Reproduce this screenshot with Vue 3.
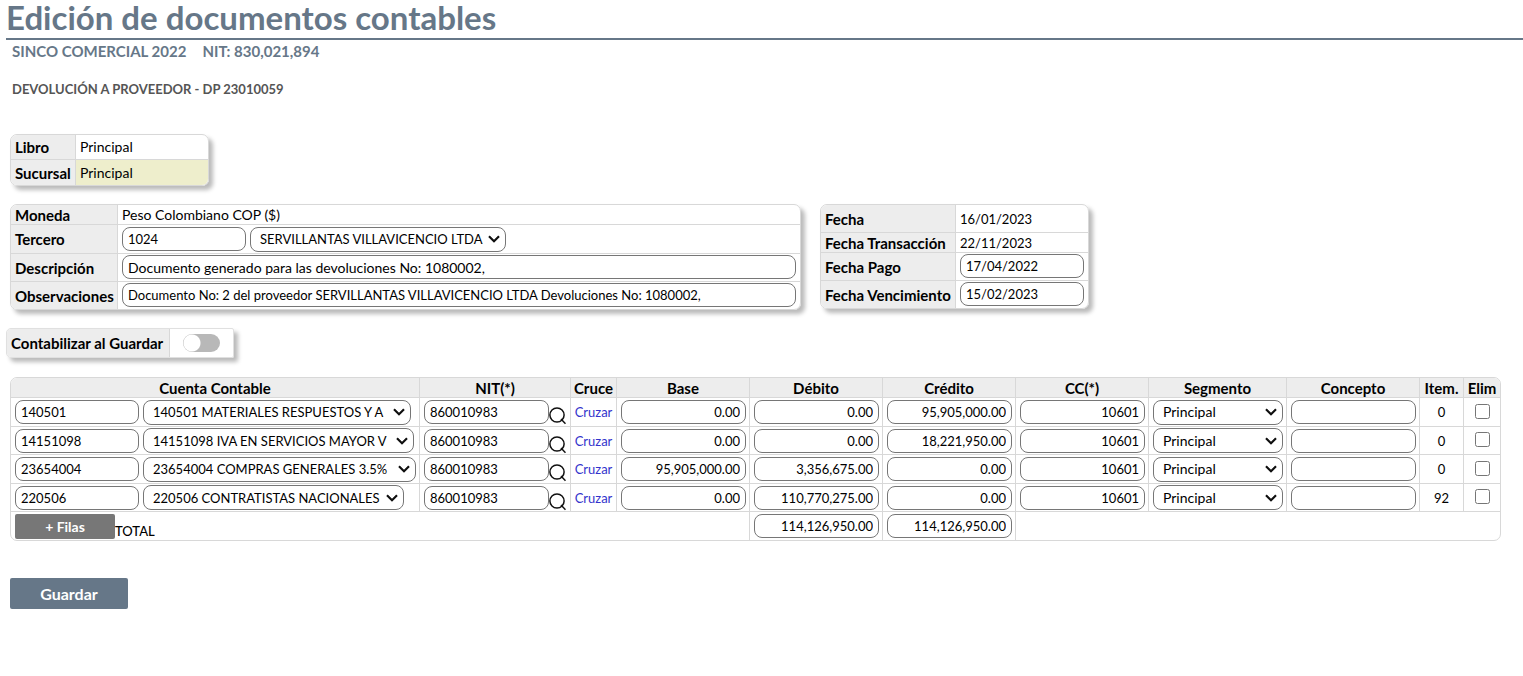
<script setup>
import { ref } from 'vue'

const moneda = 'Peso Colombiano COP ($)'
const tercero = ref('1024')
const descripcion = ref('Documento generado para las devoluciones No: 1080002,')
const observaciones = ref('Documento No: 2 del proveedor SERVILLANTAS VILLAVICENCIO LTDA Devoluciones No: 1080002,')
const fechaPago = ref('17/04/2022')
const fechaVencimiento = ref('15/02/2023')
const contabilizar = ref(false)

const filas = ref([
  { cuenta: '140501', nombre: '140501 MATERIALES RESPUESTOS Y A', ancho: 268, nit: '860010983', base: '0.00', debito: '0.00', credito: '95,905,000.00', cc: '10601', item: 0 },
  { cuenta: '14151098', nombre: '14151098 IVA EN SERVICIOS MAYOR V', ancho: 271, nit: '860010983', base: '0.00', debito: '0.00', credito: '18,221,950.00', cc: '10601', item: 0 },
  { cuenta: '23654004', nombre: '23654004 COMPRAS GENERALES 3.5%', ancho: 273, nit: '860010983', base: '95,905,000.00', debito: '3,356,675.00', credito: '0.00', cc: '10601', item: 0 },
  { cuenta: '220506', nombre: '220506 CONTRATISTAS NACIONALES', ancho: 261, nit: '860010983', base: '0.00', debito: '110,770,275.00', credito: '0.00', cc: '10601', item: 92 },
])
</script>

<template>
  <main class="page">
    <header>
      <h1>Edición de documentos contables</h1>
      <div class="company"><span>SINCO COMERCIAL 2022</span><span>NIT: 830,021,894</span></div>
      <h2>DEVOLUCIÓN A PROVEEDOR - DP 23010059</h2>
    </header>

    <table class="box book">
      <tbody>
        <tr><th scope="row">Libro</th><td>Principal</td></tr>
        <tr><th scope="row">Sucursal</th><td class="marked">Principal</td></tr>
      </tbody>
    </table>

    <div class="panels">
      <table class="box general">
        <tbody>
          <tr class="short"><th scope="row">Moneda</th><td class="roomy">{{ moneda }}</td></tr>
          <tr class="tall">
            <th scope="row"><label for="tercero">Tercero</label></th>
            <td>
              <div class="pair">
                <input id="tercero" v-model="tercero" class="code" type="text">
                <select class="provider" aria-label="Nombre del tercero"><option>SERVILLANTAS VILLAVICENCIO LTDA</option></select>
              </div>
            </td>
          </tr>
          <tr><th scope="row"><label for="descripcion">Descripción</label></th><td class="field"><input id="descripcion" v-model="descripcion" class="roomy" type="text"></td></tr>
          <tr><th scope="row"><label for="observaciones">Observaciones</label></th><td class="field"><input id="observaciones" v-model="observaciones" type="text"></td></tr>
        </tbody>
      </table>

      <table class="box dates">
        <tbody>
          <tr><th scope="row">Fecha</th><td>16/01/2023</td></tr>
          <tr class="short"><th scope="row">Fecha Transacción</th><td>22/11/2023</td></tr>
          <tr><th scope="row"><label for="pago">Fecha Pago</label></th><td class="field"><input id="pago" v-model="fechaPago" type="text"></td></tr>
          <tr><th scope="row"><label for="vencimiento">Fecha Vencimiento</label></th><td class="field"><input id="vencimiento" v-model="fechaVencimiento" type="text"></td></tr>
        </tbody>
      </table>
    </div>

    <div class="posting">
      <label for="contabilizar">Contabilizar al Guardar</label>
      <div class="switch-cell"><input id="contabilizar" v-model="contabilizar" class="switch" type="checkbox"></div>
    </div>

    <table class="entries">
      <colgroup>
        <col class="c-account"><col class="c-nit"><col class="c-cross"><col class="c-amount"><col class="c-amount"><col class="c-amount"><col class="c-amount"><col class="c-segment"><col class="c-amount"><col class="c-item"><col class="c-del">
      </colgroup>
      <thead>
        <tr>
          <th scope="col">Cuenta Contable</th>
          <th scope="col">NIT(*)</th>
          <th scope="col">Cruce</th>
          <th scope="col">Base</th>
          <th scope="col">Débito</th>
          <th scope="col">Crédito</th>
          <th scope="col">CC(*)</th>
          <th scope="col">Segmento</th>
          <th scope="col">Concepto</th>
          <th scope="col">Item.</th>
          <th scope="col">Elim</th>
        </tr>
      </thead>
      <tbody>
        <tr v-for="fila in filas" :key="fila.nombre">
          <td>
            <div class="pair">
              <input v-model="fila.cuenta" class="code" type="text" aria-label="Cuenta">
              <select :style="{ width: fila.ancho + 'px' }" aria-label="Nombre de la cuenta"><option>{{ fila.nombre }}</option></select>
            </div>
          </td>
          <td>
            <div class="lookup">
              <input v-model="fila.nit" type="text" aria-label="NIT">
              <button type="button" class="search" aria-label="Buscar NIT">
                <svg viewBox="0 0 17 18" width="17" height="18" fill="none" stroke="#111" stroke-width="1.5">
                  <circle cx="8" cy="8" r="7.1" />
                  <path d="M12 12 L16.5 16.7" />
                </svg>
              </button>
            </div>
          </td>
          <td class="center"><a href="#">Cruzar</a></td>
          <td><input v-model="fila.base" class="num" type="text" aria-label="Base"></td>
          <td><input v-model="fila.debito" class="num" type="text" aria-label="Débito"></td>
          <td><input v-model="fila.credito" class="num" type="text" aria-label="Crédito"></td>
          <td><input v-model="fila.cc" class="num" type="text" aria-label="CC"></td>
          <td><select class="roomy" aria-label="Segmento"><option>Principal</option></select></td>
          <td><input type="text" aria-label="Concepto"></td>
          <td class="center">{{ fila.item }}</td>
          <td class="center"><input class="tick" type="checkbox" aria-label="Eliminar"></td>
        </tr>
      </tbody>
      <tfoot>
        <tr>
          <td colspan="4"><div class="total"><button type="button" class="add">+ Filas</button><span>TOTAL</span></div></td>
          <td><input class="num" type="text" value="114,126,950.00" aria-label="Total débito"></td>
          <td><input class="num" type="text" value="114,126,950.00" aria-label="Total crédito"></td>
          <td colspan="5"></td>
        </tr>
      </tfoot>
    </table>

    <button type="button" class="save">Guardar</button>
  </main>
</template>

<style>
body { margin: 0; background: #fff; }
</style>

<style scoped>
.page {
  font-family: Lato, "Open Sans", sans-serif;
  font-size: 13px;
  line-height: 18px;
  color: #000;
  padding: 0 22px 24px 10px;
}
h1 {
  margin: 0 -22px 0 -4px;
  height: 38px;
  line-height: 34px;
  font-size: 33px;
  font-weight: 700;
  color: #678;
  border-bottom: 2px solid #678;
}
.company {
  display: flex;
  gap: 16px;
  padding: 1px 2px 0;
  font-size: 15px;
  line-height: 20px;
  font-weight: 700;
  color: #678;
}
h2 {
  margin: 18px 2px 0;
  font-size: 13px;
  line-height: 20px;
  font-weight: 700;
  color: #555;
}

table { border-collapse: separate; border-spacing: 0; }
th, td {
  box-sizing: border-box;
  padding: 0 3px 0 4px;
  border: 0 solid #d8d8d8;
  border-width: 0 1px 1px 0;
  vertical-align: middle;
}
th { background: #ededed; font-size: 15px; font-weight: 700; white-space: nowrap; }
tr > :last-child { border-right-width: 0; }
.field { padding-top: 1px; vertical-align: top; }

.box {
  border: 1px solid #d8d8d8;
  border-radius: 7px;
  overflow: hidden;
  box-shadow: 4px 4px 4px #bbb;
}
.box td:last-child { padding-right: 4px; }
.box th { text-align: left; }
.box tr { height: 28px; }
.box tr.short { height: 20px; }
.box tr.tall { height: 29px; }
.box tr:last-child > * { border-bottom-width: 0; }
.box tr:last-child { height: 27px; }

.book { width: 199px; margin-top: 35px; table-layout: fixed; }
.book th { width: 65px; }
.book tr, .book tr:last-child { height: 25px; }
.book td { font-size: 14px; }
.book .marked { background: #eeeecc; }

.panels { display: flex; align-items: flex-start; gap: 19px; margin-top: 18px; }
.general { width: calc(52vw - 1px); }
.general th { width: 107px; }
.dates { width: 269px; }
.dates th { width: 135px; }

input[type="text"], select {
  box-sizing: border-box;
  display: block;
  width: 100%;
  height: 24px;
  margin: 0;
  padding: 0 5px;
  border: 1px solid #767676;
  border-radius: 8px;
  background: #fff;
  color: #000;
  font: inherit;
}
select {
  appearance: none;
  height: 25px;
  padding: 0 22px 0 9px;
  background: #fff url("data:image/svg+xml,%3Csvg xmlns='http://www.w3.org/2000/svg' width='12' height='8' fill='none' stroke='%23111' stroke-width='2.2'%3E%3Cpath d='M1 1.2 L6 6.2 L11 1.2'/%3E%3C/svg%3E") no-repeat right 5px center;
}
td.roomy, input.roomy[type="text"], select.roomy { font-size: 14px; }
.pair { display: flex; align-items: center; gap: 4px; }
.pair .code { width: 124px; flex: none; }
.pair select { flex: none; }
.pair .provider { width: 256px; }
.num { text-align: right; }

.posting {
  display: flex;
  width: 228px;
  height: 30px;
  box-sizing: border-box;
  margin: 18px 0 0 -4px;
  border: 1px solid #e0e0e0;
  border-radius: 5px 2px 2px 5px;
  overflow: hidden;
  box-shadow: 4px 4px 4px #bbb;
}
.posting label {
  flex: none;
  width: 163px;
  box-sizing: border-box;
  padding-left: 4px;
  background: #ededed;
  border-right: 1px solid #d8d8d8;
  font-size: 15px;
  font-weight: 700;
  line-height: 28px;
  white-space: nowrap;
}
.switch-cell { flex: 1; display: flex; align-items: center; justify-content: center; }
.switch {
  appearance: none;
  width: 37px;
  height: 18px;
  margin: 0;
  border-radius: 9px;
  background: radial-gradient(circle at 9px 9px, #fff 8px, #b8b8b8 9px);
}
.switch:checked { background: radial-gradient(circle at 28px 9px, #fff 8px, #678 9px); }

.entries {
  width: 100%;
  margin-top: 19px;
  table-layout: fixed;
  border: 1px solid #d8d8d8;
  border-radius: 7px;
  overflow: hidden;
}
.c-account { width: 409px; }
.c-nit { width: 151px; }
.c-cross { width: 46px; }
.c-amount { width: 133px; }
.c-segment { width: 138px; }
.c-item { width: 44px; }
.c-del { width: 36px; }
.entries th { text-align: center; padding: 0; }
.entries thead tr { height: 20px; }
.entries tbody tr { height: 28px; }
.entries tbody tr:nth-child(odd) { height: 29px; }
.entries tfoot tr { height: 28px; }
.entries tfoot td { border-bottom-width: 0; }
.entries .center { text-align: center; padding: 0; }
.lookup { display: flex; align-items: flex-start; height: 24px; }
.lookup input { flex: 1; min-width: 0; }
.search { flex: none; width: 18px; height: 25px; padding: 7px 0 0; border: 0; background: none; }
.search svg { display: block; }
.tick { display: block; width: 15px; height: 15px; margin: 0 auto 2px; }
a { color: #33c; text-decoration: none; }
.total { display: flex; align-items: flex-end; height: 26px; }
.total span { line-height: 16px; font-weight: 500; }
.add, .save {
  border: 0;
  border-radius: 2px;
  color: #fff;
  font-family: inherit;
  font-weight: 700;
}
.add { width: 100px; height: 25px; align-self: center; background: #777; font-size: 14px; }
.save { display: block; width: 118px; height: 31px; margin-top: 37px; background: #678; font-size: 16px; }
</style>
